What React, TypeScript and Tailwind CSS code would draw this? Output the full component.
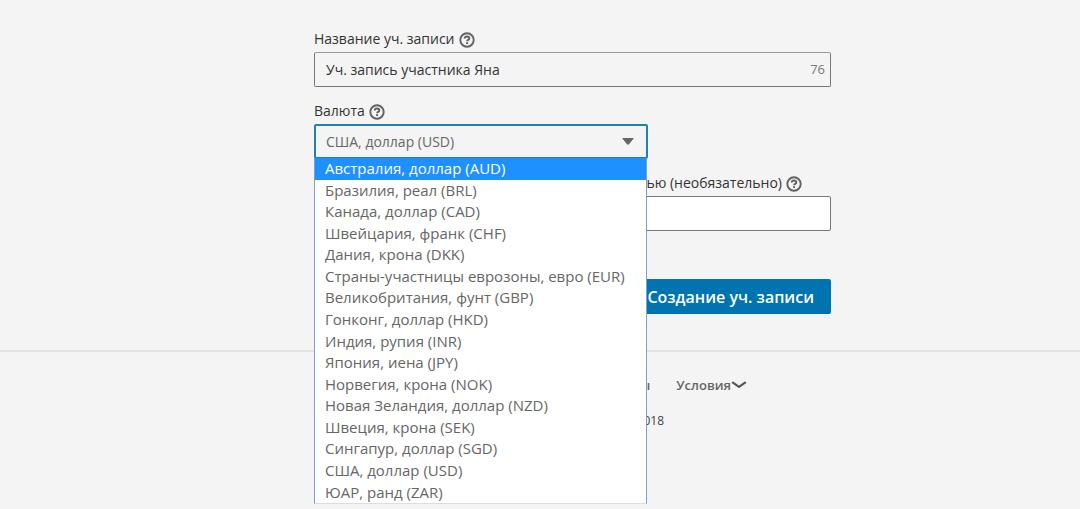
import React, { useState } from 'react';

const currencies = [
  'Австралия, доллар (AUD)',
  'Бразилия, реал (BRL)',
  'Канада, доллар (CAD)',
  'Швейцария, франк (CHF)',
  'Дания, крона (DKK)',
  'Страны-участницы еврозоны, евро (EUR)',
  'Великобритания, фунт (GBP)',
  'Гонконг, доллар (HKD)',
  'Индия, рупия (INR)',
  'Япония, иена (JPY)',
  'Норвегия, крона (NOK)',
  'Новая Зеландия, доллар (NZD)',
  'Швеция, крона (SEK)',
  'Сингапур, доллар (SGD)',
  'США, доллар (USD)',
  'ЮАР, ранд (ZAR)',
];

const HelpIcon: React.FC = () => (
  <svg viewBox="0 0 16 16" className="mt-0.5 size-4 shrink-0 text-[#626262]" fill="none" stroke="currentColor" strokeWidth="2" aria-hidden>
    <circle cx="8" cy="8" r="6.7" strokeWidth="1.9" />
    <path d="M5.7 6.6C5.7 5.2 6.7 4.5 8 4.5s2.3.7 2.3 1.900c0 1.500-2.200 1.500-2.200 2.900" strokeWidth="1.900" />
    <path d="M8.100 10.200v1.800" />
  </svg>
);

const App: React.FC = () => {
  const [name, setName] = useState('Уч. запись участника Яна');
  const [page, setPage] = useState('');
  const [currency, setCurrency] = useState('США, доллар (USD)');
  const [active, setActive] = useState(currencies[0]);

  return (
    <div className="min-h-screen overflow-hidden bg-[#f4f4f4] pt-[27px] font-['Open_Sans','Noto_Sans',sans-serif] text-sm text-[#333]">
      <div className="pl-[65px]">
        <form className="mx-auto max-w-[517px]" onSubmit={(e) => e.preventDefault()}>
          <div className="mb-3">
            <div className="mb-px flex h-6 items-center gap-1">
              <label htmlFor="name">Название уч. записи</label>
              <HelpIcon />
            </div>
            <div className="flex h-[35px] items-center rounded-xs border border-[#777] border-t-[#999] pr-[5px] pl-[11px]">
              <input id="name" value={name} onChange={(e) => setName(e.target.value)} className="min-w-0 flex-1 bg-transparent outline-none" />
              <span className="text-[13px] text-[#777]">76</span>
            </div>
          </div>

          <div className="mb-3">
            <div className="mb-px flex h-6 items-center gap-1">
              <label htmlFor="currency">Валюта</label>
              <HelpIcon />
            </div>
            <div className="relative max-w-[334px]">
              <select
                id="currency"
                value={currency}
                onChange={(e) => setCurrency(e.target.value)}
                className="block h-[35px] w-full appearance-none rounded-xs border-2 border-[#2380ad] bg-[#f4f4f4] px-2.5 text-[#666] outline-none"
              >
                {currencies.map((c) => <option key={c}>{c}</option>)}
              </select>
              <svg viewBox="0 0 12 7" className="pointer-events-none absolute top-3.5 right-3.5 h-[7px] w-3" aria-hidden>
                <path d="M0 0h12L7 6.300Q6 7.200 5 6.300z" fill="#666" />
              </svg>
              <ul role="listbox" aria-label="Валюта" className="absolute top-[34px] right-px left-0 z-10 grid h-[346px] grid-rows-16 border-x border-b border-x-[#7d9fd0] border-b-[#ddd] bg-white text-[15px] text-[#666]">
                {currencies.map((c) => (
                  <li
                    key={c}
                    role="option"
                    aria-selected={c === active}
                    onMouseEnter={() => setActive(c)}
                    onClick={() => setCurrency(c)}
                    className={c === active ? 'flex items-center bg-[#1e90ff] px-2.5 text-white' : 'flex items-center px-2.5'}
                  >
                    {c}
                  </li>
                ))}
              </ul>
            </div>
          </div>

          <div className="mb-12">
            <div className="mb-px flex h-6 items-center justify-end gap-1 pr-[29px]">
              <label htmlFor="page">ью (необязательно)</label>
              <HelpIcon />
            </div>
            <input id="page" value={page} onChange={(e) => setPage(e.target.value)} className="block h-[35px] w-full rounded-xs border border-[#777] bg-white px-3 outline-none" />
          </div>

          <div className="flex justify-end">
            <button type="submit" className="h-[35px] rounded-xs bg-[#0073b1] px-[17px] text-base font-semibold text-white">Создание уч. записи</button>
          </div>
        </form>
      </div>

      <footer className="mt-9 border-t-2 border-[#e3e3e3] pt-[23px] pl-[65px]">
        <div className="mx-auto max-w-[517px]">
          <nav className="flex h-5 items-center justify-end gap-[26px] pr-[84px] text-[13px] font-semibold text-[#666]">
            <a href="#">ы</a>
            <button type="button" className="flex items-center">
              Условия
              <svg viewBox="0 0 16 8" className="h-2 w-4" fill="none" stroke="#555" strokeWidth="2.200" strokeLinejoin="round" aria-hidden>
                <path d="M1.200 1.200 8 5.800l6.800-4.600" />
              </svg>
            </button>
          </nav>
          <p className="mt-[18px] pr-[167px] text-right text-xs text-[#444]">018</p>
        </div>
      </footer>
    </div>
  );
};

export default App;
